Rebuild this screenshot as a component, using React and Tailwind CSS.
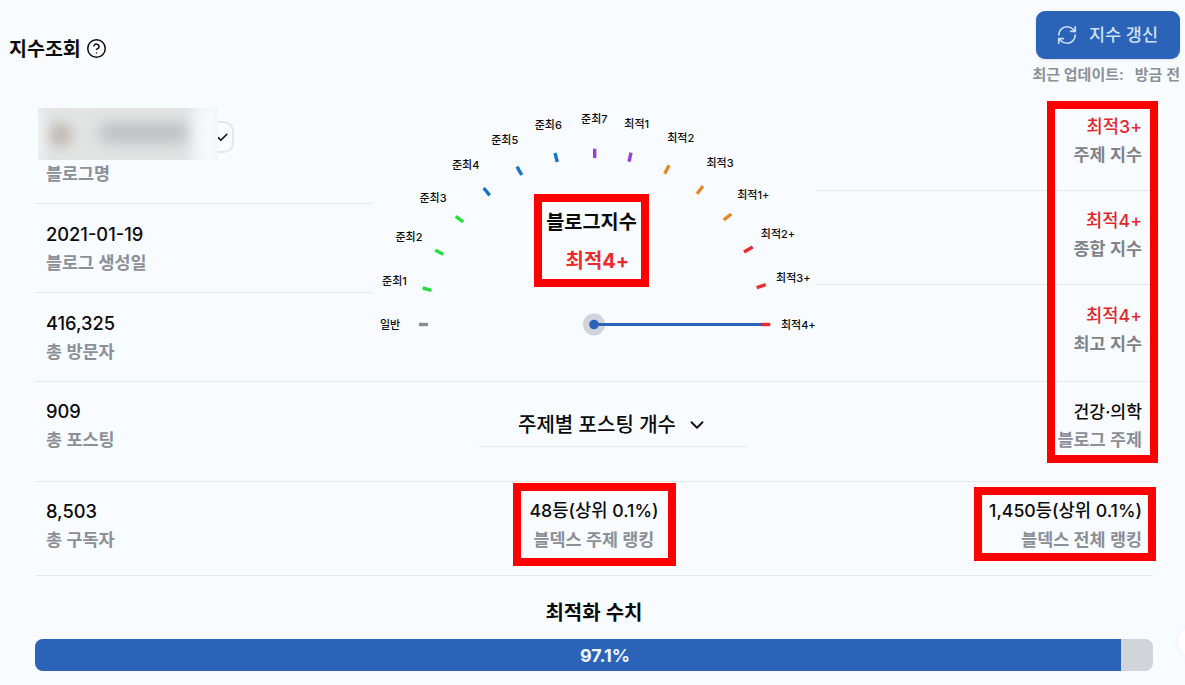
import React from "react";
import { RefreshCw, ChevronDown, Check, CircleHelp } from "lucide-react";

const OX = 372;
const OY = 98;
const ticks = [
  { t: "일반", lx: 390, ly: 324.5, c: "#8a8d92", a: [419, 324.5, 428, 324.5] },
  { t: "준최1", lx: 394.5, ly: 281, c: "#22e03c", a: [422.7, 288, 431.3, 290.3] },
  { t: "준최2", lx: 409, ly: 236.7, c: "#22e03c", a: [435.3, 250.3, 443.3, 254.3] },
  { t: "준최3", lx: 433, ly: 197.7, c: "#22e03c", a: [455.7, 216.3, 463.3, 222] },
  { t: "준최4", lx: 465.7, ly: 164.7, c: "#1a73c8", a: [483.7, 188, 489.7, 195.3] },
  { t: "준최5", lx: 504.7, ly: 140, c: "#1a73c8", a: [517, 166.7, 521.7, 175] },
  { t: "준최6", lx: 548.3, ly: 124.7, c: "#1a73c8", a: [555, 153, 557.3, 162] },
  { t: "준최7", lx: 594.3, ly: 118.7, c: "#9b3fd6", a: [594.7, 148.7, 594.7, 158] },
  { t: "최적1", lx: 636.7, ly: 123.7, c: "#9b3fd6", a: [631, 152.7, 629, 161.7] },
  { t: "최적2", lx: 680.7, ly: 138, c: "#e08a20", a: [669, 165.3, 664.7, 173.7] },
  { t: "최적3", lx: 720, ly: 162.7, c: "#e08a20", a: [703, 186, 697, 193.7] },
  { t: "최적1+", lx: 753.3, ly: 195, c: "#e08a20", a: [731.3, 214, 723.7, 220] },
  { t: "최적2+", lx: 778, ly: 234.3, c: "#ee2a2a", a: [752.7, 247, 744, 252] },
  { t: "최적3+", lx: 793.3, ly: 278, c: "#ee2a2a", a: [765.7, 284.7, 756.7, 287.7] },
  { t: "최적4+", lx: 798.3, ly: 324.5, c: "#ee2a2a", a: [762, 324.5, 770.3, 324.5] },
];

function Stat({ value, label, align = "left", size = "text-[17.7px]", gap = "", valueClass = "text-[#0b0b0b]", labelClass = "text-[#8b8f97]" }) {
  return (
    <div className={align === "right" ? "text-right" : align === "center" ? "text-center" : "text-left"}>
      <div className={`${size} leading-[28px] font-medium whitespace-nowrap ${valueClass}`}>{value}</div>
      <div className={`text-[17.4px] leading-[28px] font-semibold whitespace-nowrap ${gap} ${labelClass}`}>{label}</div>
    </div>
  );
}

function Gauge() {
  const hubX = 594 - OX;
  const hubY = 324.5 - OY;
  return (
    <div className="relative h-[283px]">
      <svg className="absolute inset-0 overflow-visible" width="444" height="283" viewBox="0 0 444 283">
        <circle cx={hubX} cy={hubY} r="11" fill="#d1d5db" />
        <line x1={hubX} y1={hubY} x2={762 - OX} y2={hubY} stroke="#2a63b8" strokeWidth="3.2" />
        <circle cx={hubX} cy={hubY} r="4.8" fill="#2a63b8" />
        {ticks.map((k) => (
          <line
            key={k.t}
            x1={k.a[0] - OX}
            y1={k.a[1] - OY}
            x2={k.a[2] - OX}
            y2={k.a[3] - OY}
            stroke={k.c}
            strokeWidth="3.4"
          />
        ))}
      </svg>
      {ticks.map((k) => (
        <span
          key={k.t}
          className="absolute -translate-x-1/2 -translate-y-1/2 whitespace-nowrap text-[11px] leading-[14px] font-medium text-[#0b0b0b]"
          style={{ left: k.lx - OX, top: k.ly - OY }}
        >
          {k.t}
        </span>
      ))}
      <div className="absolute left-[162px] top-[96px] w-[115px] h-[93px] flex flex-col items-center">
        <div className="text-[19.7px] leading-[28px] mt-[14px] font-bold text-[#0b0b0b] whitespace-nowrap">블로그지수</div>
        <div className="text-[20px] leading-[28px] mt-[11px] ml-[12px] font-bold text-[#ee2a2a] whitespace-nowrap">최적4+</div>
      </div>
    </div>
  );
}

export default function App() {
  return (
    <div className="relative w-[1185px] h-[685px] overflow-hidden bg-[#f8fbff] font-['Inter','Noto_Sans_CJK_KR',sans-serif]">
      <header className="flex justify-between pl-[9px] pr-[5px] pt-[11px] h-[98px]">
        <div className="flex items-center gap-[5px] h-[76px]">
          <h1 className="text-[19.5px] leading-[28px] font-semibold text-[#0b0b0b]">지수조회</h1>
          <CircleHelp size={21} strokeWidth={1.7} className="text-[#0b0b0b] -mt-[1px]" />
        </div>
        <div className="flex flex-col items-end">
          <button className="flex items-center justify-center gap-[11px] w-[144px] h-[48px] rounded-[9px] bg-[#2a63b8] text-[#cfe0f7] text-[17.5px] font-medium shadow-sm">
            <RefreshCw size={22} strokeWidth={1.8} className="-ml-[2px]" />
            <span>지수 갱신</span>
          </button>
          <div className="mt-[6px] flex gap-[11px] text-[15px] leading-[20px] font-semibold text-[#8b8f97]">
            <span>최근 업데이트:</span>
            <span>방금 전</span>
          </div>
        </div>
      </header>

      <main className="mx-[35px] w-[1118px]">
        <div className="grid grid-cols-[337px_444px_337px] border-b border-[#e5e7eb]">
          <div>
            <div className="h-[106px] pl-[3px] pt-[10px] border-b border-[#e5e7eb]">
              <div className="relative h-[52px] w-[196px]">
                <div className="absolute left-[180px] top-[13px] w-[16px] h-[32px] flex items-center rounded-r-[10px] border-2 border-l-0 border-[#e5e7eb]">
                  <Check size={13} strokeWidth={3} className="text-[#0b0b0b] -ml-[2px]" />
                </div>
                <div className="absolute left-0 top-0 w-[180px] h-[52px] overflow-hidden bg-[#e3e5e5]">
                  <div className="absolute left-[12px] top-[15px] w-[22px] h-[24px] rounded-full bg-[#bdb4ae] blur-[7px]" />
                  <div className="absolute left-[62px] top-[16px] w-[88px] h-[18px] bg-[#b8bbbb] blur-[8px]" />
                  <div className="absolute left-[-8px] top-0 w-[14px] h-[52px] bg-[#eef0f0] blur-[4px]" />
                  <div className="absolute left-[156px] top-[-8px] w-[30px] h-[68px] bg-[#f6f8fa] blur-[7px]" />
                </div>
              </div>
              <div className="pl-[8px] text-[17.4px] leading-[28px] font-semibold text-[#8b8f97]">블로그명</div>
            </div>
            <div className="h-[89px] pl-[11px] pt-[16px] border-b border-[#e5e7eb]">
              <Stat size="text-[18.3px]" gap="mt-[1px]" value="2021-01-19" label="블로그 생성일" />
            </div>
            <div className="h-[88px] pl-[11px] pt-[16px]">
              <Stat size="text-[18.3px]" gap="mt-[1px]" value="416,325" label="총 방문자" />
            </div>
          </div>

          <Gauge />

          <div>
            <div className="h-[93px] pr-[11px] pt-[15px] border-b border-[#e5e7eb]">
              <Stat align="right" value="최적3+" label="주제 지수" valueClass="text-[#e0282d]" labelClass="text-[#7f838a]" />
            </div>
            <div className="h-[94px] pr-[11px] pt-[16px] border-b border-[#e5e7eb]">
              <Stat align="right" value="최적4+" label="종합 지수" valueClass="text-[#e0282d]" labelClass="text-[#7f838a]" />
            </div>
            <div className="h-[96px] pr-[11px] pt-[17px]">
              <Stat align="right" value="최적4+" label="최고 지수" valueClass="text-[#e0282d]" labelClass="text-[#7f838a]" />
            </div>
          </div>
        </div>

        <div className="grid grid-cols-[337px_444px_337px] h-[100px] border-b border-[#e5e7eb]">
          <div className="pl-[11px] pt-[15px]">
            <Stat size="text-[18.3px]" gap="mt-[1px]" value="909" label="총 포스팅" />
          </div>
          <div className="pt-[25px] pl-[107px]">
            <div className="w-[268px] h-[40px] flex items-center justify-center gap-[10px] pb-[3px] border-b border-[#e5e7eb]">
              <span className="text-[20px] leading-[28px] font-medium text-[#0b0b0b] whitespace-nowrap">주제별 포스팅 개수</span>
              <ChevronDown size={22} strokeWidth={2} className="text-[#0b0b0b]" />
            </div>
          </div>
          <div className="pr-[11px] pt-[16px]">
            <Stat align="right" size="text-[17.2px]" value="건강·의학" label="블로그 주제" />
          </div>
        </div>

        <div className="grid grid-cols-[337px_444px_337px] h-[94px] border-b border-[#e5e7eb]">
          <div className="pl-[11px] pt-[15px]">
            <Stat size="text-[18.3px]" gap="mt-[1px]" value="8,503" label="총 구독자" />
          </div>
          <div className="pt-[15px]">
            <Stat align="center" gap="mt-[1px]" value="48등(상위 0.1%)" label="블덱스 주제 랭킹" />
          </div>
          <div className="pr-[11px] pt-[15px]">
            <Stat align="right" gap="mt-[1px]" value="1,450등(상위 0.1%)" label="블덱스 전체 랭킹" />
          </div>
        </div>

        <section className="pt-[23px]">
          <div className="text-center text-[20px] leading-[28px] font-semibold text-[#0b0b0b]">최적화 수치</div>
          <div className="mt-[12px] h-[32px] rounded-[8px] overflow-hidden bg-[#d1d5db] flex">
            <div className="w-[1086px] h-full bg-[#2a63b8] flex items-center justify-center pl-[54px] text-[18px] font-bold text-[#eef4fc]">
              97.1%
            </div>
          </div>
        </section>
      </main>

      {/* annotation rectangles over the content */}
      <div className="absolute left-[534px] top-[194px] w-[115px] h-[93px] border-[8px] border-[#ff0000]" />
      <div className="absolute left-[1047px] top-[101px] w-[111px] h-[362px] border-[8px] border-[#ff0000]" />
      <div className="absolute left-[513px] top-[483px] w-[163px] h-[83px] border-[8px] border-[#ff0000]" />
      <div className="absolute left-[974px] top-[487px] w-[182px] h-[74px] border-[8px] border-[#ff0000]" />
      <div className="absolute left-[1179px] top-[626px] w-[32px] h-[32px] rounded-full bg-white shadow-[0_0_8px_rgba(0,0,0,0.04)]" />
    </div>
  );
}
